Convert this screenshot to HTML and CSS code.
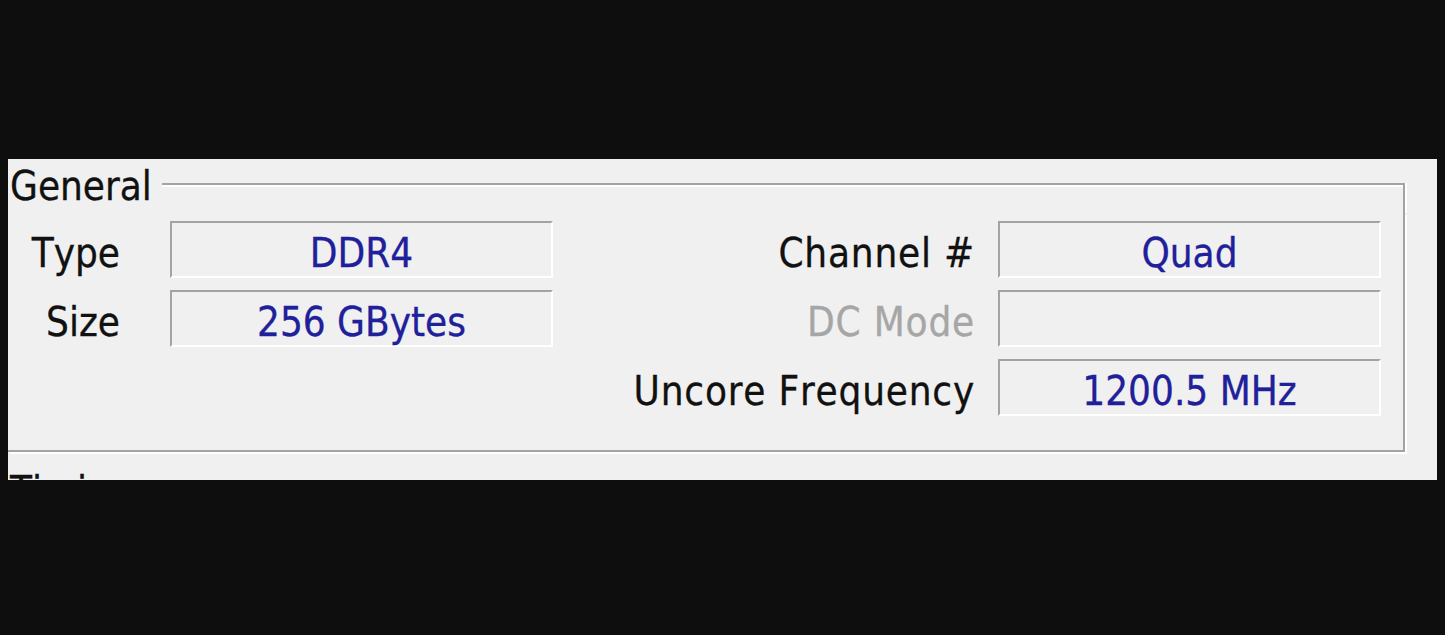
FILE: index.html
```html
<!DOCTYPE html>
<html lang="en">
<head>
<meta charset="utf-8">
<title>Memory</title>
<link rel="stylesheet" href="styles.css">
</head>
<body>
<div class="panel">
  <div class="group">
    <div class="group-head">
      <span class="legend">General</span>
      <div class="rule"></div>
    </div>
    <div class="group-body">
      <div class="label">Type</div>
      <div class="field">DDR4</div>
      <div class="label right">Channel #</div>
      <div class="field">Quad</div>

      <div class="label">Size</div>
      <div class="field">256 GBytes</div>
      <div class="label right disabled">DC Mode</div>
      <div class="field"></div>

      <div class="label"></div>
      <div class="blank"></div>
      <div class="label right">Uncore Frequency</div>
      <div class="field">1200.5 MHz</div>
    </div>
  </div>
  <div class="group next">
    <div class="group-head">
      <span class="legend">Timings</span>
      <div class="rule"></div>
    </div>
  </div>
</div>
</body>
</html>
```

FILE: styles.css
```css
html, body {
  margin: 0;
  padding: 0;
  background: #0e0e0e;
}

body {
  padding: 159px 8px 0 8px;
  font-family: "DejaVu Sans Condensed", "DejaVu Sans", sans-serif;
  font-stretch: condensed;
  font-size: 40px;
  font-kerning: none;
  color: #111;
  -webkit-text-stroke: 0.3px currentColor;
}

.panel {
  width: 1429px;
  height: 321px;
  background: #f0f0f0;
  overflow: hidden;
}

.group {
  width: 1397px;
  margin-bottom: 12px;
}

.group-head {
  display: flex;
  height: 54px;
}

.legend {
  line-height: 54px;
  padding-left: 2px;
  margin-right: 10px;
  white-space: nowrap;
}

.rule {
  flex: 1;
  margin-top: 24px;
  border-top: 2px solid #a3a3a3;
  border-right: 2px solid #a3a3a3;
  box-shadow: inset 0 2px 0 #ffffff, 2px 0 0 #ffffff;
}

.group-body {
  display: grid;
  grid-template-columns: 162px 383px 1fr 383px;
  grid-auto-rows: 57px;
  row-gap: 12px;
  padding: 8px 22px 34px 0;
  border-right: 2px solid #a3a3a3;
  border-bottom: 2px solid #a3a3a3;
  box-shadow: 2px 2px 0 #ffffff;
}

.label {
  display: flex;
  align-items: center;
  justify-content: flex-end;
  padding: 6px 50px 0 0;
  white-space: nowrap;
}

.label.right {
  padding-right: 23px;
  letter-spacing: 0.8px;
}

.label.disabled {
  color: #a6a6a6;
}

.field {
  box-sizing: border-box;
  display: flex;
  align-items: center;
  justify-content: center;
  padding-top: 6px;
  border-top: 2px solid #a3a3a3;
  border-left: 2px solid #a3a3a3;
  border-bottom: 2px solid #ffffff;
  border-right: 2px solid #ffffff;
  color: #20209a;
  white-space: nowrap;
}
```
